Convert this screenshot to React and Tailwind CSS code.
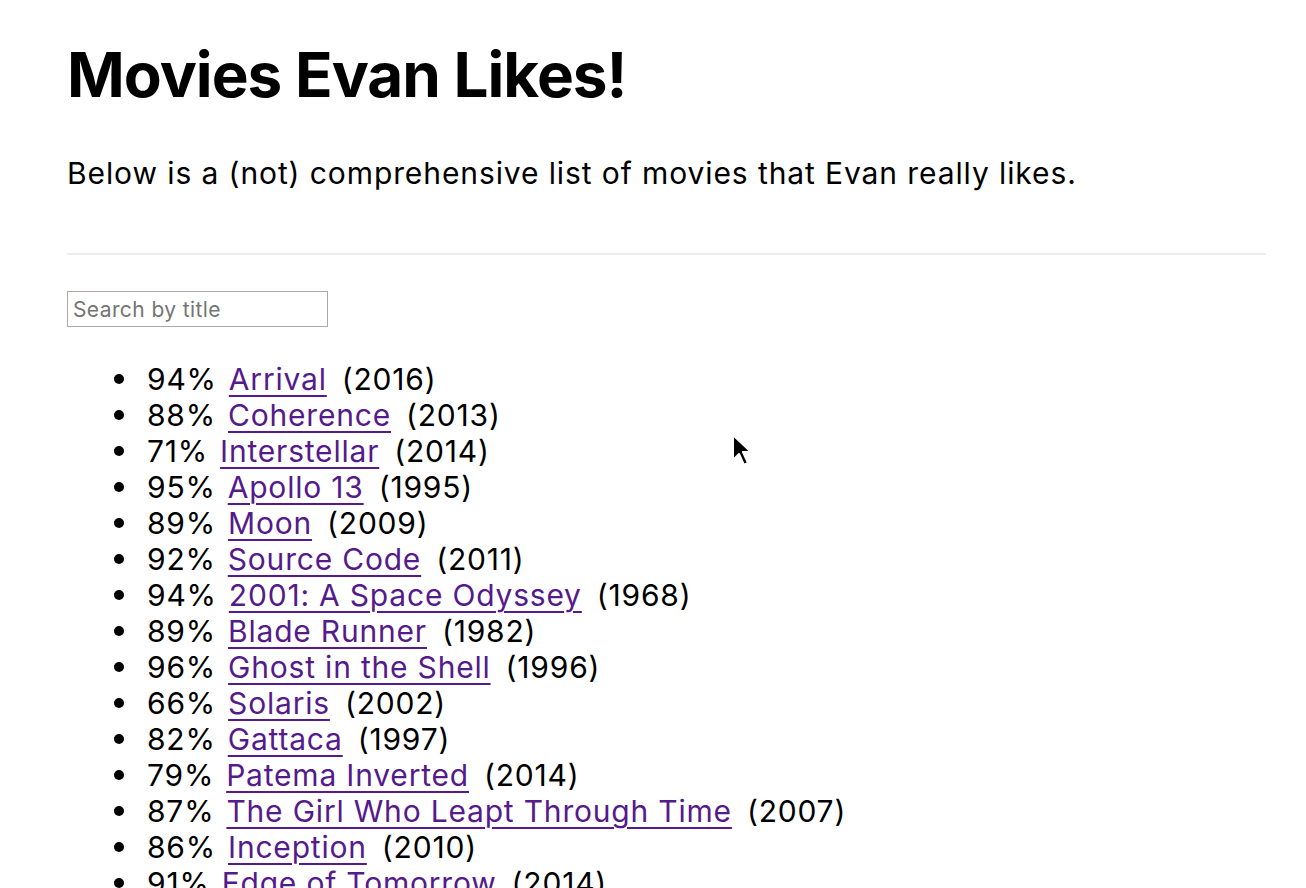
import React from "react";

const movies = [
  ["94%", "Arrival", "2016"],
  ["88%", "Coherence", "2013"],
  ["71%", "Interstellar", "2014"],
  ["95%", "Apollo 13", "1995"],
  ["89%", "Moon", "2009"],
  ["92%", "Source Code", "2011"],
  ["94%", "2001: A Space Odyssey", "1968"],
  ["89%", "Blade Runner", "1982"],
  ["96%", "Ghost in the Shell", "1996"],
  ["66%", "Solaris", "2002"],
  ["82%", "Gattaca", "1997"],
  ["79%", "Patema Inverted", "2014"],
  ["87%", "The Girl Who Leapt Through Time", "2007"],
  ["86%", "Inception", "2010"],
  ["91%", "Edge of Tomorrow", "2014"],
  ["90%", "Primer", "2004"],
  ["93%", "Gravity", "2013"],
];

export default function App() {
  return (
    <div
      className="relative min-h-screen bg-white text-black pl-[67px] pr-[40px] pt-[37px]"
      style={{ fontFamily: "Inter, 'Noto Sans', sans-serif" }}
    >
      <h1 className="text-[62px] font-bold leading-[76px] tracking-[-1px]">Movies Evan Likes!</h1>
      <p className="mt-[42px] text-[30px] leading-[36px] tracking-[0.9px]">
        Below is a (not) comprehensive list of movies that Evan really likes.
      </p>
      <hr className="mt-[62px] border-0 border-t-2 border-[#eeeeee]" />
      <input
        type="text"
        placeholder="Search by title"
        className="mt-[36px] block h-[36px] w-[261px] border border-[#aaaaaa] px-[5px] text-[21px] tracking-[0.4px] placeholder:text-[#757575] outline-none"
      />
      <ul className="mt-[34px] list-none pl-[80px] text-[30px] leading-[36px] tracking-[0.8px]">
        {movies.map(([score, title, year]) => (
          <li key={title} className="relative">
            <span className="absolute left-[-33px] top-[13px] h-[10px] w-[10px] rounded-full bg-black" />
            {score}
            <span className="inline-block w-[12px]" />
            <a href="#" className="text-[#551a8b] underline underline-offset-[5px] decoration-[2px]">
              {title}
            </a>
            <span className="inline-block w-[15px]" />({year})
          </li>
        ))}
      </ul>
      <svg
        className="absolute left-[731px] top-[434px]"
        width="24"
        height="36"
        viewBox="0 0 24 36"
      >
        <path d="M2 1 L2 26 L8 20 L13 31 L17 29 L12 18 L20 18 Z" fill="black" stroke="white" strokeWidth="2" strokeLinejoin="round" />
      </svg>
    </div>
  );
}
